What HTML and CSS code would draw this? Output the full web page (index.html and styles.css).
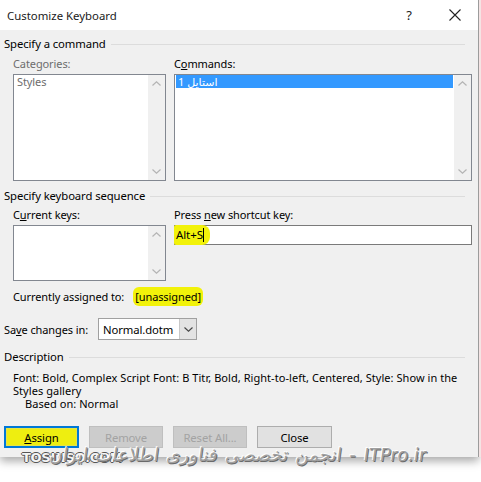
FILE: index.html
```html
<!DOCTYPE html>
<html>
<head>
<meta charset="utf-8">
<link rel="stylesheet" href="styles.css">
</head>
<body>
<div class="frame">
  <div class="dialog">
    <div class="titlebar">
      <span class="title">Customize Keyboard</span>
      <span class="tbtn help">?</span>
      <span class="tbtn close"><svg width="12" height="12" viewBox="0 0 12 12"><path d="M0.5 0.5L11.5 11.5M11.5 0.5L0.5 11.5" stroke="#222" stroke-width="1.1" fill="none"/></svg></span>
    </div>
    <div class="body">
      <div class="ghead"><span>Specify a command</span><div class="rule"></div></div>
      <div class="cols">
        <div class="col left">
          <div class="label dis">Categories:</div>
          <div class="listbox tall">
            <div class="items"><div class="item dis">Styles</div></div>
            <div class="vscroll">
              <div class="arr"><svg width="9" height="5" viewBox="0 0 9 5"><path d="M0.5 4.5L4.5 0.8L8.5 4.5" stroke="#b4b4b4" stroke-width="1.2" fill="none"/></svg></div>
              <div class="arr"><svg width="9" height="5" viewBox="0 0 9 5"><path d="M0.5 0.5L4.5 4.2L8.5 0.5" stroke="#b4b4b4" stroke-width="1.2" fill="none"/></svg></div>
            </div>
          </div>
        </div>
        <div class="col right">
          <div class="label">C<u>o</u>mmands:</div>
          <div class="listbox tall">
            <div class="items"><div class="item sel"><span>1</span> <span>استایل</span></div></div>
            <div class="vscroll">
              <div class="arr"><svg width="9" height="5" viewBox="0 0 9 5"><path d="M0.5 4.5L4.5 0.8L8.5 4.5" stroke="#b4b4b4" stroke-width="1.2" fill="none"/></svg></div>
              <div class="arr"><svg width="9" height="5" viewBox="0 0 9 5"><path d="M0.5 0.5L4.5 4.2L8.5 0.5" stroke="#b4b4b4" stroke-width="1.2" fill="none"/></svg></div>
            </div>
          </div>
        </div>
      </div>

      <div class="ghead g2"><span>Specify keyboard sequence</span><div class="rule"></div></div>
      <div class="cols">
        <div class="col left">
          <div class="label l2">C<u>u</u>rrent keys:</div>
          <div class="listbox short">
            <div class="items"></div>
            <div class="vscroll">
              <div class="arr"><svg width="9" height="5" viewBox="0 0 9 5"><path d="M0.5 4.5L4.5 0.8L8.5 4.5" stroke="#b4b4b4" stroke-width="1.2" fill="none"/></svg></div>
              <div class="arr"><svg width="9" height="5" viewBox="0 0 9 5"><path d="M0.5 0.5L4.5 4.2L8.5 0.5" stroke="#b4b4b4" stroke-width="1.2" fill="none"/></svg></div>
            </div>
          </div>
        </div>
        <div class="col right">
          <div class="label l2">Press <u>n</u>ew shortcut key:</div>
          <div class="input"><span class="hl keyhl">Alt+S<span class="caret"></span></span></div>
        </div>
      </div>

      <div class="assigned">
        <span class="alabel">Currently assigned to:</span>
        <span class="hl unhl">[unassigned]</span>
      </div>

      <div class="saverow">
        <span class="slabel">Sa<u>v</u>e changes in:</span>
        <div class="combo"><span class="ctext">Normal.dotm</span><span class="cbtn"><svg width="9" height="5" viewBox="0 0 9 5"><path d="M0.5 0.5L4.5 4.2L8.5 0.5" stroke="#444" stroke-width="1.1" fill="none"/></svg></span></div>
      </div>

      <div class="ghead g3"><span>Description</span><div class="rule"></div></div>
      <div class="desc">
        <div>Font: Bold, Complex Script Font: B Titr, Bold, Right-to-left, Centered, Style: Show in the</div>
        <div>Styles gallery</div>
        <div class="indent">Based on: Normal</div>
      </div>

      <div class="buttons">
        <div class="btn assign"><span class="ahl"><u>A</u>ssign</span></div>
        <div class="btn disabled">Remove</div>
        <div class="btn disabled">Reset All...</div>
        <div class="btn closebtn">Close</div>
      </div>
    </div>
  </div>
  <div class="edge"></div>
</div>
<div class="watermark">
  <span class="wm1">TOSINSO.COM</span>
  <span class="wm2">انجمن تخصصی فناوری اطلاعات ایران - ITPro.ir</span>
</div>
</body>
</html>
```

FILE: styles.css
```css
* { box-sizing: border-box; }
html, body { margin: 0; padding: 0; }
body {
  width: 481px;
  height: 482px;
  overflow: hidden;
  background: #fff;
  font-family: "Noto Sans", "DejaVu Sans", sans-serif;
  font-size: 11px;
  letter-spacing: -0.1px;
  color: #000;
  position: relative;
}
u { text-decoration: underline; text-underline-offset: 1px; }

.frame { display: flex; align-items: flex-start; }
.dialog {
  width: 479px;
  background: #f0f0f0;
  border-right: 1px solid #9c9c9c;
  box-shadow: 0 4px 9px rgba(0,0,0,0.35);
}
.edge { width: 2px; height: 457px; background: #f4e4e4; }

.titlebar {
  height: 30px;
  background: #fff;
  display: flex;
  align-items: center;
  padding-left: 7px;
}
.title { flex: 1; font-size: 11.4px; letter-spacing: 0; color: #1a1a1a; }
.tbtn { width: 46px; height: 30px; display: flex; align-items: center; justify-content: center; }
.help { font-size: 13px; color: #222; }
.close svg { display: block; }

.body { padding: 6px 6px 9px 4px; }

.ghead { display: flex; align-items: center; height: 16px; line-height: 16px; font-size: 11.3px; }
.ghead span { white-space: nowrap; }
.rule { flex: 1; height: 1px; background: #dcdcdc; margin-left: 5px; margin-right: 7px; }
.g2 { margin-top: 7px; }
.g3 { margin-top: 9px; }

.cols { display: flex; gap: 8px; padding-left: 9px; }
.col.left { width: 153px; }
.col.right { flex: 1; }

.label { line-height: 16px; height: 16px; margin-top: 4px; margin-bottom: 2px; white-space: nowrap; }
.label.l2 { margin-top: 3px; }
.dis { color: #6d6d6d; }

.listbox {
  display: flex;
  background: #fff;
  border: 1px solid #828790;
}
.listbox.tall { height: 107px; }
.listbox.short { height: 56px; }
.items { flex: 1; padding: 0 1px; }
.item { height: 13px; line-height: 13px; padding-left: 2px; font-size: 11px; white-space: nowrap; }
.item.sel { background: #3399ff; color: #fff; }
.vscroll {
  width: 17px;
  background: #f0f0f0;
  display: flex;
  flex-direction: column;
  justify-content: space-between;
}
.arr { height: 17px; display: flex; align-items: center; justify-content: center; }
.arr svg { display: block; }

.input {
  height: 20px;
  background: #fff;
  border: 1px solid #7a7a7a;
  display: flex;
  align-items: center;
}
.hl { background: #f2f20a; }
.keyhl {
  display: inline-flex;
  align-items: center;
  height: 20px;
  padding: 0 6px 0 2px;
  margin-left: -1px;
  border-radius: 2px 8px 8px 2px;
  line-height: 16px;
  font-size: 11.5px;
}
.caret { display: inline-block; width: 1px; height: 14px; background: #000; }

.assigned { display: flex; align-items: center; height: 16px; margin-top: 7px; padding-left: 9px; }
.alabel { white-space: nowrap; }
.unhl {
  margin-left: 9px;
  padding: 2px 2px;
  line-height: 15px;
  border-radius: 6px;
}

.saverow { display: flex; align-items: center; margin-top: 14px; height: 22px; }
.slabel { width: 94px; white-space: nowrap; }
.combo {
  width: 99px;
  height: 22px;
  background: #fff;
  border: 1px solid #a0a0a0;
  display: flex;
  align-items: center;
}
.ctext { flex: 1; padding-left: 4px; white-space: nowrap; font-size: 11.3px; }
.cbtn {
  width: 17px;
  height: 20px;
  background: #e3e3e3;
  border-left: 1px solid #c8c8c8;
  display: flex;
  align-items: center;
  justify-content: center;
}

.desc { margin-top: 6px; padding-left: 9px; line-height: 13px; letter-spacing: 0.05px; }
.desc div { white-space: nowrap; }
.desc .indent { padding-left: 12px; }

.buttons { display: flex; margin-top: 16px; height: 22px; }
.btn {
  height: 22px;
  width: 74px;
  display: flex;
  align-items: center;
  justify-content: center;
  border: 1px solid #adadad;
  background: #e1e1e1;
  white-space: nowrap;
  font-size: 11.3px;
}
.btn + .btn { margin-left: 10px; }
.assign { width: 75px; border: 2px solid #0078d7; background: #e4e44a; padding: 1px; }
.ahl { display: flex; align-items: center; justify-content: center; width: 100%; height: 100%; background: #eeee10; border-radius: 2px; }
.disabled { background: #cccccc; border-color: #bfbfbf; color: #a3a3a3; }
.closebtn { margin-left: auto; width: 75px; }

.watermark {
  position: absolute;
  left: 0;
  top: 444px;
  width: 481px;
  height: 26px;
  font-family: "DejaVu Sans", sans-serif;
  letter-spacing: 0;
}
.wm1 {
  position: absolute;
  left: 22px;
  top: 6px;
  font-size: 13px;
  font-weight: bold;
  letter-spacing: -0.3px;
  color: #f4f4f4;
  text-shadow: 1px 0 0 #555, -1px 0 0 #555, 0 1px 0 #555, 0 -1px 0 #555;
}
.wm2 {
  position: absolute;
  left: 50px;
  top: 0;
  font-size: 18px;
  word-spacing: 2px;
  white-space: nowrap;
  color: #a0a0a0;
  text-shadow: -1px -1px 0 #fff, 1px 1px 0 #6a6a6a;
  transform: skewX(-8deg);
}
```
